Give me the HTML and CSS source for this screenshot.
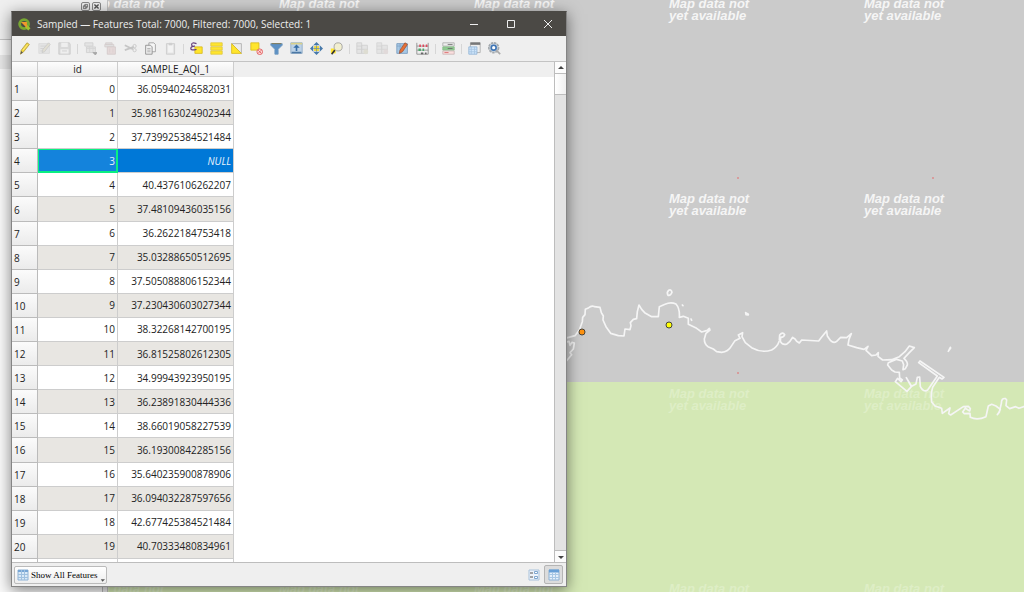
FILE: index.html
```html
<!DOCTYPE html>
<html lang="en">
<head>
<meta charset="utf-8">
<title>Sampled — Features</title>
<link rel="stylesheet" href="styles.css">
</head>
<body class="desktop">
<svg class="map" aria-label="Map canvas">
  <rect class="land" x="0" y="382" width="100%" height="100%"/>
  <g class="map-label">
    <text x="84" y="8">Map data not</text>
    <text x="279" y="8">Map data not</text>
    <text x="474" y="8">Map data not</text>
    <text x="669" y="8">Map data not</text><text x="669" y="20">yet available</text>
    <text x="864" y="8">Map data not</text><text x="864" y="20">yet available</text>
    <text x="669" y="203">Map data not</text><text x="669" y="215">yet available</text>
    <text x="864" y="203">Map data not</text><text x="864" y="215">yet available</text>
  </g>
  <g class="map-label faint">
    <text x="669" y="398">Map data not</text><text x="669" y="410">yet available</text>
    <text x="864" y="398">Map data not</text><text x="864" y="410">yet available</text>
    <text x="84" y="593">Map data not</text>
    <text x="279" y="593">Map data not</text>
    <text x="474" y="593">Map data not</text>
    <text x="669" y="593">Map data not</text>
    <text x="864" y="593">Map data not</text>
  </g>
  <g fill="#d79c9c"><rect x="737" y="177" width="2" height="2"/><rect x="932" y="177" width="2" height="2"/><rect x="737" y="372" width="2" height="2"/></g>
  <g class="coast" transform="translate(550 280) scale(.3333)">
    <path d="M45 175L75 167L88 150L97 125L98 112L105 104L106 88L115 84Q125 75 133 80L150 82L154 98L160 108L159 120L168 140L182 160L205 167L222 168L225 147L240 149L243 137L241 128L250 118L260 116L262 95L267 75L275 88L284 98L305 110L325 110L328 80L345 73Q362 65 378 72Q390 86 388 112L400 109L415 115L415 133L440 145L455 156L472 151L478 145L480 150L468 160L463 177Q463 192 474 200L490 207L500 215L515 217Q535 215 543 200L555 182L570 175L565 165L578 158L576 170L586 188L605 203Q635 220 665 210Q682 200 687 185"/>
    <path d="M45 187L57 184L60 196L66 187L73 189L70 207L60 218L65 224L50 242M356 31Q364 27 366 37Q362 48 354 46Q349 37 356 31ZM397 75l2 2M423 117l2 4M587 98l8 5v2l-7-1z"/>
  </g>
  <g class="coast" transform="translate(780 300) scale(.3333)">
    <path d="M-2 120L-1 105Q8 94 14 104Q12 111 2 112L1 124Q9 138 22 131L29 125L38 112L45 117L50 124L58 129L65 120L116 123L125 111L140 93L142 108L152 122Q161 131 170 124L182 112L200 113L214 101L207 118L204 135L230 143L252 148L264 139L258 151L275 167L288 165L295 158L294 169L308 180L335 179L358 170L375 155L388 138L403 143L388 158L372 175Q384 186 382 195L376 206L369 209L371 194L367 183L350 178L325 188L323 195L335 210L345 216L358 217L359 234L367 240L363 245L353 235L346 245L381 274L394 260L379 233L395 259L408 252L412 232L419 231L421 260Q430 278 443 270L472 228L416 188L420 183L492 232L486 237L478 232L458 262L455 275L454 290L455 306L465 318L485 325L487 340L510 324L506 341L512 345L550 320L565 319L571 326L569 333L556 325L548 336L553 341L570 340L571 352Q592 362 618 350L625 318L635 313L648 318L661 328L657 337L652 344L658 337L662 319L664 311Q664 293 677 296L680 300L678 317L689 326L707 320L717 325L732 320M511 142L505 154L512 144"/>
  </g>
  <circle cx="582" cy="332" r="3" fill="#ff9310" stroke="#4b453b"/>
  <circle cx="669" cy="325" r="3" fill="#ffff08" stroke="#44463b"/>
</svg>

<aside class="dock">
  <div class="dock-title">
    <button class="dock-button" aria-label="Float panel"><svg viewBox="0 0 10 10"><path d="M4 2h4v4H4zM2 4h4v4H2z"/></svg></button>
    <button class="dock-button" aria-label="Close panel"><svg viewBox="0 0 10 10"><path class="cross" d="M2 2l6 6M8 2L2 8"/></svg></button>
  </div>
  <div class="dock-list"><div class="dock-row"></div></div>
</aside>

<main class="window">
  <header class="titlebar">
    <svg class="logo" viewBox="0 0 16 16"><circle cx="7.500" cy="7.500" r="5.500" fill="none" stroke="#78a832" stroke-width="3.500"/><path d="M10 10l4 4" stroke="#9fc42f" stroke-width="4"/><path d="M6 6h4v4z" fill="#f19a2c" stroke="#f19a2c" stroke-width="2"/></svg>
    <h1 class="title">Sampled — Features Total: 7000, Filtered: 7000, Selected: 1</h1>
    <button class="caption" aria-label="Minimize"><svg viewBox="0 0 10 10"><path d="M1 5.500h8"/></svg></button>
    <button class="caption" aria-label="Maximize"><svg viewBox="0 0 10 10"><path d="M1.500 1.500h7v7h-7z"/></svg></button>
    <button class="caption" aria-label="Close"><svg viewBox="0 0 10 10"><path d="M1 1l8 8M9 1L1 9"/></svg></button>
  </header>

  <nav class="toolbar" aria-label="Attribute table tools">
    <button class="tool" aria-label="Toggle editing"><svg viewBox="0 0 16 16"><path d="M3 15l1-5 7-9 3 2-7 9z" fill="#f2d63b" stroke="#b39c43"/><path d="M3 15l1-4 2 2z" fill="#555"/><path d="M6 10l6-7" stroke="#fff29a"/></svg></button>
    <button class="tool" disabled aria-label="Multi edit"><svg viewBox="0 0 16 16"><path d="M1 2h13v12H1z" fill="#ccc" stroke="#aaa"/><path d="M3 5h8M3 8h6M3 11h4" stroke="#888"/><path d="M5 13l1-4 7-8 2 2-7 9z" fill="#c2b993" stroke="#777"/></svg></button>
    <button class="tool" disabled aria-label="Save edits"><svg viewBox="0 0 16 16"><path d="M1 1h13l1 2v12H1z" fill="#aaa" stroke="#777"/><path d="M4 1h8v5H4zM3 9h10v5H3z" fill="#eee"/><path d="M5 11h6" stroke="#777"/></svg></button>
    <span class="separator"></span>
    <button class="tool" disabled aria-label="Add feature"><svg viewBox="0 0 16 16"><path d="M1 1h10v4H1zM3 6h11v7H3z" fill="#ccc" stroke="#888"/><path d="M3 8h11M7 6v7M11 6v7" stroke="#999"/><path d="M11 13h5l-2 3z" fill="#000" stroke="#000"/></svg></button>
    <button class="tool" disabled aria-label="Delete selected features"><svg viewBox="0 0 16 16"><path d="M1 3h11v3H1zM2 1h8v2H2z" fill="#bbb" stroke="#998080"/><path d="M4 6h10v9H4z" fill="#d0a8a8" stroke="#927474"/><path d="M7 8v5M11 8v5" stroke="#a88"/></svg></button>
    <button class="tool" disabled aria-label="Cut"><svg viewBox="0 0 16 16"><path d="M1 4l10 5M1 10l11-4" stroke="#666" stroke-width="2"/><circle cx="13" cy="5" r="2" fill="none" stroke="#666"/><circle cx="13" cy="10" r="2" fill="none" stroke="#666"/></svg></button>
    <button class="tool" aria-label="Copy"><svg viewBox="0 0 16 16"><path d="M6 1h6l2 2v9H6z" fill="#f6f6f6" stroke="#999"/><path d="M2 4h6l2 2v9H2z" fill="#eee" stroke="#888"/><path d="M4 8h4M4 10h4M4 12h4" stroke="#aaa"/></svg></button>
    <button class="tool" disabled aria-label="Paste"><svg viewBox="0 0 16 16"><path d="M3 2h10v13H3z" fill="#ccc" stroke="#777"/><path d="M5 4h6v9H5z" fill="#fff"/><path d="M6 1h4v3H6z" fill="#888"/></svg></button>
    <span class="separator"></span>
    <button class="tool" aria-label="Select by expression"><svg viewBox="0 0 16 16"><path d="M6 6h9v8H6z" fill="#ffe52c" stroke="#d7b91b"/><path d="M8 2Q2 0 2 3t4 2Q1 5 1 8t7 1" fill="none" stroke="#68437e" stroke-width="1.500"/></svg></button>
    <button class="tool" aria-label="Select all"><svg viewBox="0 0 16 16"><path d="M1 1h14v4H1zM1 6h14v4H1zM1 11h14v4H1z" fill="#ffe52c" stroke="#e0c740"/></svg></button>
    <button class="tool" aria-label="Invert selection"><svg viewBox="0 0 16 16"><path d="M2 2h12v12z" fill="#ececec" stroke="#aaa"/><path d="M2 2v12h12z" fill="#ffe52c" stroke="#d7b91b"/></svg></button>
    <button class="tool" aria-label="Deselect all"><svg viewBox="0 0 16 16"><path d="M1 1h10v9H1z" fill="#ffe52c" stroke="#d7b91b"/><circle cx="12" cy="12" r="3.500" fill="#fbdada" stroke="#e15656"/><path d="M10 10l4 4M14 10l-4 4" stroke="#e15656"/></svg></button>
    <button class="tool" aria-label="Filter"><svg viewBox="0 0 16 16"><path d="M1 2h14v2l-5 5v6H6V9L1 4z" fill="#5d91c4" stroke="#6c97bf"/><path d="M2 2h12" stroke="#81703d"/></svg></button>
    <button class="tool" aria-label="Move selection to top"><svg viewBox="0 0 16 16"><path d="M1 1h14v13H1z" fill="#bcd2e7" stroke="#8da8c3"/><path d="M1 2h14" stroke="#d9d08a" stroke-width="2"/><path d="M8 3l4 4H9v4H7V7H4z" fill="#366da6"/><path d="M2 13h12" stroke="#4b78a5" stroke-width="2"/></svg></button>
    <button class="tool" aria-label="Pan to selection"><svg viewBox="0 0 16 16"><path d="M8 0l4 4H4zM8 16l4-4H4zM0 8l4-4v8zM16 8l-4-4v8z" fill="#4779aa"/><path d="M5 5h6v6H5z" fill="#f2d934"/><path d="M4 8h8M8 4v8" stroke="#7394a0"/></svg></button>
    <button class="tool" aria-label="Zoom to selection"><svg viewBox="0 0 16 16"><path d="M1 8h6v6H1z" fill="#ffe52c"/><path d="M6 10l-4 5" stroke="#333" stroke-width="2"/><circle cx="10" cy="6" r="5" fill="#f2efd0" stroke="#999"/></svg></button>
    <span class="separator"></span>
    <button class="tool" disabled aria-label="New field"><svg viewBox="0 0 16 16"><path d="M1 1h6v13H1zM7 4h7v10H7z" fill="#ccc" stroke="#888"/><path d="M1 5h6M1 9h13" stroke="#888"/><circle cx="12" cy="12" r="3" fill="#b9b690"/></svg></button>
    <button class="tool" disabled aria-label="Delete field"><svg viewBox="0 0 16 16"><path d="M1 1h6v13H1zM7 4h7v10H7z" fill="#ccc" stroke="#999"/><path d="M1 5h6M1 9h13" stroke="#999"/><circle cx="12" cy="12" r="3" fill="#c4abab"/></svg></button>
    <button class="tool" aria-label="Organize columns"><svg viewBox="0 0 16 16"><path d="M1 2h13v12H1z" fill="#a6c8e5" stroke="#7599bd"/><path d="M1 5h13M5 2v12" stroke="#7fa4c8"/><path d="M4 14l1-4 6-9 3 2-6 9z" fill="#e76f35" stroke="#9e573c"/></svg></button>
    <button class="tool" aria-label="Field calculator"><svg viewBox="0 0 16 16"><path d="M1 1v14M15 1v14M1 5h14M1 10h14M1 15h14" stroke="#888"/><path d="M4 3h2v3H4zM8 3h2v3H8zM12 3h2v3h-2z" fill="#df4b5d"/><path d="M3 8h3v3H3zM8 8h2v3H8z" fill="#4ba76a"/><path d="M6 13h3v2H6zM11 13h2v2h-2z" fill="#666"/></svg></button>
    <span class="separator"></span>
    <button class="tool" aria-label="Conditional formatting"><svg viewBox="0 0 16 16"><path d="M1 1h14v4H1z" fill="#eee" stroke="#aaa"/><path d="M1 6h14v4H1z" fill="#8fcb91" stroke="#86bb88"/><path d="M1 11h14v4H1z" fill="#fbdede" stroke="#c9b5b5"/><path d="M7 3h6M7 8h6" stroke="#666"/><path d="M3 13h5" stroke="#d96363"/></svg></button>
    <span class="separator"></span>
    <button class="tool" aria-label="Dock table"><svg viewBox="0 0 16 16"><path d="M3 1h12v12H3z" fill="#eee" stroke="#aaa"/><path d="M3 2h12" stroke="#777" stroke-width="3"/><path d="M1 6h10v9H1z" fill="#cfe5fa" stroke="#8eb2d5"/><path d="M1 9h10M1 12h10M4 6v9M8 6v9" stroke="#a5c4e2"/></svg></button>
    <button class="tool" aria-label="Actions"><svg viewBox="0 0 16 16"><circle cx="7" cy="7" r="6" fill="#c9d4df" stroke="#a3a8ac" stroke-width="2" stroke-dasharray="3 1"/><circle cx="7" cy="7" r="3" fill="#fff" stroke="#3f75b5" stroke-width="2"/><path d="M10 10l5 5" stroke="#aaa" stroke-width="2"/></svg></button>
  </nav>

  <section class="view">
    <div class="table-area">
      <table class="features">
        <thead><tr><th class="corner"></th><th class="col-id" scope="col">id</th><th class="col-value" scope="col">SAMPLE_AQI_1</th></tr></thead>
        <tbody>
          <tr><th scope="row">1</th><td>0</td><td>36.05940246582031</td></tr>
          <tr><th scope="row">2</th><td>1</td><td>35.981163024902344</td></tr>
          <tr><th scope="row">3</th><td>2</td><td>37.739925384521484</td></tr>
          <tr class="selected"><th scope="row">4</th><td class="current">3</td><td class="null">NULL</td></tr>
          <tr><th scope="row">5</th><td>4</td><td>40.4376106262207</td></tr>
          <tr><th scope="row">6</th><td>5</td><td>37.48109436035156</td></tr>
          <tr><th scope="row">7</th><td>6</td><td>36.2622184753418</td></tr>
          <tr><th scope="row">8</th><td>7</td><td>35.03288650512695</td></tr>
          <tr><th scope="row">9</th><td>8</td><td>37.505088806152344</td></tr>
          <tr><th scope="row">10</th><td>9</td><td>37.230430603027344</td></tr>
          <tr><th scope="row">11</th><td>10</td><td>38.32268142700195</td></tr>
          <tr><th scope="row">12</th><td>11</td><td>36.81525802612305</td></tr>
          <tr><th scope="row">13</th><td>12</td><td>34.99943923950195</td></tr>
          <tr><th scope="row">14</th><td>13</td><td>36.23891830444336</td></tr>
          <tr><th scope="row">15</th><td>14</td><td>38.66019058227539</td></tr>
          <tr><th scope="row">16</th><td>15</td><td>36.19300842285156</td></tr>
          <tr><th scope="row">17</th><td>16</td><td>35.640235900878906</td></tr>
          <tr><th scope="row">18</th><td>17</td><td>36.094032287597656</td></tr>
          <tr><th scope="row">19</th><td>18</td><td>42.677425384521484</td></tr>
          <tr><th scope="row">20</th><td>19</td><td>40.70333480834961</td></tr>
          <tr class="partial"><th></th><td></td><td></td></tr>
        </tbody>
      </table>
      <div class="header-rest"></div>
    </div>
    <div class="scrollbar">
      <button class="arrow" aria-label="Scroll up"><svg viewBox="0 0 8 8"><path d="M1 5h6L4 2z"/></svg></button>
      <div class="thumb"></div>
      <div class="track"></div>
      <button class="arrow" aria-label="Scroll down"><svg viewBox="0 0 8 8"><path d="M1 3h6L4 6z"/></svg></button>
    </div>
  </section>

  <footer class="statusbar">
    <button class="show-all"><svg class="small-icon" viewBox="0 0 12 12"><path d="M1 1h10v10H1z" fill="#d9e9f7" stroke="#8eb2d5"/><path d="M1 2h10" stroke="#77a6d5" stroke-width="2"/><path d="M1 5.500h10M1 8.500h10M4.500 1v10M7.500 1v10" stroke="#9fc0df"/></svg><span>Show All Features</span><svg class="drop" viewBox="0 0 6 4"><path d="M1 1h5L3 4z"/></svg></button>
    <span class="spacer"></span>
    <button class="mode" aria-label="Form view"><svg class="small-icon" viewBox="0 0 12 12"><path d="M1 1h10v10H1z" fill="#edf3fa" stroke="#a9c2db"/><path d="M2 4h3M2 8h3" stroke="#555"/><path d="M6.500 2.500h3v2h-3zM6.500 7.500h3v2h-3z" fill="#fff" stroke="#7fa7cf"/></svg></button>
    <button class="mode pressed" aria-label="Table view"><svg class="small-icon" viewBox="0 0 12 12"><path d="M1 1h10v10H1z" fill="#e5f0fb" stroke="#8eb2d5"/><path d="M1 2h10" stroke="#69a0d7" stroke-width="3"/><path d="M1 5.500h10M1 8.500h10M4.500 3v8M7.500 3v8" stroke="#a9c8e5"/></svg></button>
  </footer>
</main>
</body>
</html>
```
FILE: styles.css
```css
* { box-sizing: border-box; }

.desktop {
  position: relative;
  margin: 0;
  min-height: 100vh;
  overflow: hidden;
  background: #cbcbcb;
  color: #222;
  font: 10px/14px "Open Sans", "Noto Sans", sans-serif;
}

button {
  display: flex;
  align-items: center;
  justify-content: center;
  margin: 0;
  padding: 0;
  border: 0;
  background: none;
  color: inherit;
  font: inherit;
}

/* Map canvas */
.map { position: absolute; inset: 0; width: 100%; height: 100%; }
.land { fill: #d4e8b5; }
.map-label { fill: #f5f5f5; font: italic bold 13px "Liberation Sans", Arial, sans-serif; }
.map-label.faint { fill: #deeec6; }
.coast path { fill: none; stroke: #f5f5f5; stroke-width: 5; stroke-linejoin: round; stroke-linecap: round; }

/* Docked panel behind the window */
.dock {
  position: absolute;
  inset: 0 auto 0 0;
  width: 108px;
  display: flex;
  flex-direction: column;
  border-right: 1px solid #c4c4c4;
  background: #efefef;
}
.dock-title { display: flex; justify-content: flex-end; gap: 2px; height: 40px; padding: 2px 6px; border-bottom: 1px solid #c4c4c4; }
.dock-button { width: 9px; height: 9px; border: 1px solid #888; border-radius: 2px; }
.dock-button svg { width: 7px; height: 7px; fill: none; stroke: #555; }
.dock-button .cross { stroke-width: 2; }
.dock-list { flex: 1; margin-right: 4px; padding-top: 15px; border-right: 1px solid #bbb; background: #fafafa; }
.dock-row { height: 14px; background: #e8e8e8; }

/* Window */
.window {
  position: absolute;
  inset: 11px auto 5px 11px;
  width: 556px;
  display: flex;
  flex-direction: column;
  border: 1px solid #858585;
  border-top-color: #4b4945;
  background: #efefef;
  box-shadow: 0 3px 14px rgba(0, 0, 0, .5);
}
.titlebar { display: flex; align-items: center; height: 24px; flex: none; padding-left: 6px; background: #4b4945; color: #eee; }
.logo { width: 13px; height: 13px; margin-right: 6px; }
.title { flex: 1; margin: 0; font-size: 10px; font-weight: 400; }
.caption { width: 37px; height: 24px; }
.caption svg { width: 10px; height: 10px; fill: none; stroke: #eee; }

.toolbar { display: flex; align-items: center; height: 26px; flex: none; padding-left: 2px; border-bottom: 1px solid #c3c3c3; }
.tool { width: 20px; height: 20px; }
.tool svg { width: 13px; height: 13px; fill: none; }
.tool:disabled svg { opacity: .3; }
.separator { width: 6px; height: 10px; background: linear-gradient(#d6d6d6, #d6d6d6) center / 1px 100% no-repeat; }

/* Attribute table */
.view { display: flex; flex: 1; min-height: 0; border-bottom: 1px solid #bdbdbd; }
.table-area { display: flex; flex: 1; overflow: hidden; background: #fff; }
.header-rest { flex: 1; height: 15px; background: #efefef; }
.features { flex: none; width: 222px; height: 100%; table-layout: fixed; border-collapse: separate; border-spacing: 0; }
.features th, .features td { padding: 0 2px; border: solid #cdcdcd; border-width: 0 1px 1px 0; font-weight: 400; line-height: 14px; }
.features thead th { height: 15px; background: linear-gradient(#fdfdfd, #ececec); }
.features .corner { width: 26px; }
.features .col-id { width: 80px; }
.features .col-value { width: 116px; }
.features tbody th { height: 24px; padding-top: 1px; border-color: #bbb; background: linear-gradient(#fbfbfb, #ebebeb); text-align: left; }
.features td { background: #fff; text-align: right; }
.features tr:nth-child(even) td { background: #e8e6e2; }
.features tbody tr.selected td { background: #0078d7; color: #e6f2fc; }
.features tbody tr.selected td.current { background: #1483dc; box-shadow: inset 0 0 0 1px #09ef83; border-color: #09ef83; }
.features .null { font-style: italic; }
.features tbody .partial th, .features .partial td { height: 3px; padding: 0; border-bottom: 0; background: #fff; }

.scrollbar { display: flex; flex-direction: column; width: 12px; border-left: 1px solid #bdbdbd; background: #e3e3e3; }
.arrow { height: 11px; background: #fcfcfc; }
.arrow svg { width: 8px; height: 8px; fill: #444; }
.thumb { height: 22px; border: solid #bdbdbd; border-width: 1px 0; background: linear-gradient(90deg, #fff, #efefef); }
.track { flex: 1; border-bottom: 1px solid #bdbdbd; }

/* Status bar */
.statusbar { display: flex; align-items: center; gap: 1px; height: 23px; flex: none; padding: 0 3px 0 2px; }
.show-all { gap: 2px; height: 18px; padding: 0 1px 0 2px; border: 1px solid #bbb; border-radius: 2px; background: linear-gradient(#fff, #eee); color: #000; font-family: "Liberation Serif", "Times New Roman", serif; font-size: 9px; }
.small-icon { width: 12px; height: 12px; }
.drop { align-self: flex-end; width: 5px; height: 4px; margin-bottom: 1px; fill: #555; }
.spacer { flex: 1; }
.mode { width: 19px; height: 19px; border: 1px solid transparent; border-radius: 2px; }
.mode.pressed { border-color: #b5b5b5; background: #dcdcdc; }
```
